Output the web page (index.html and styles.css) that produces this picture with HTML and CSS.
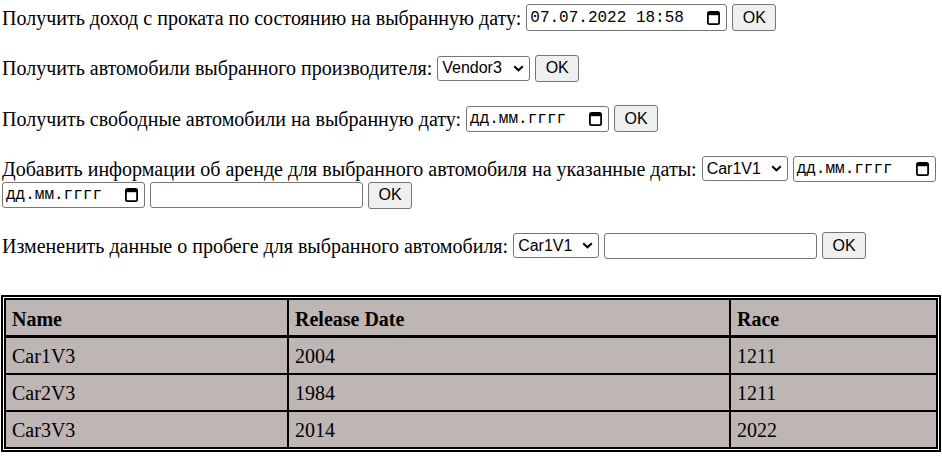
FILE: index.html
```html
<!DOCTYPE html>
<html lang="ru">
<head>
<meta charset="utf-8">
<title>Прокат автомобилей</title>
<link rel="stylesheet" href="styles.css">
</head>
<body>
<div class="forms">
  <div class="line">
    <span class="label">Получить доход с проката по состоянию на выбранную дату:</span>
    <span class="field date wide">07.07.2022 18:58<svg class="cal" width="13" height="14" viewBox="0 0 13 14"><rect x="0.9" y="0.9" width="11.2" height="12.2" rx="1.6" fill="none" stroke="#000" stroke-width="1.8"/><rect x="1" y="1" width="11" height="3.2" fill="#000"/></svg></span>
    <span class="btn">OK</span>
  </div>
  <div class="line">
    <span class="label">Получить автомобили выбранного производителя:</span>
    <span class="field select vendor">Vendor3<svg class="chev" width="11" height="7" viewBox="0 0 11 7"><path d="M1.2 1.2 L5.5 5.3 L9.8 1.2" fill="none" stroke="#000" stroke-width="2"/></svg></span>
    <span class="btn">OK</span>
  </div>
  <div class="line">
    <span class="label">Получить свободные автомобили на выбранную дату:</span>
    <span class="field date">дд.мм.гггг<svg class="cal" width="13" height="14" viewBox="0 0 13 14"><rect x="0.9" y="0.9" width="11.2" height="12.2" rx="1.6" fill="none" stroke="#000" stroke-width="1.8"/><rect x="1" y="1" width="11" height="3.2" fill="#000"/></svg></span>
    <span class="btn">OK</span>
  </div>
  <div class="line">
    <span class="label">Добавить информации об аренде для выбранного автомобиля на указанные даты:</span>
    <span class="field select car">Car1V1<svg class="chev" width="11" height="7" viewBox="0 0 11 7"><path d="M1.2 1.2 L5.5 5.3 L9.8 1.2" fill="none" stroke="#000" stroke-width="2"/></svg></span>
    <span class="field date">дд.мм.гггг<svg class="cal" width="13" height="14" viewBox="0 0 13 14"><rect x="0.9" y="0.9" width="11.2" height="12.2" rx="1.6" fill="none" stroke="#000" stroke-width="1.8"/><rect x="1" y="1" width="11" height="3.2" fill="#000"/></svg></span>
    <span class="break"></span>
    <span class="field date">дд.мм.гггг<svg class="cal" width="13" height="14" viewBox="0 0 13 14"><rect x="0.9" y="0.9" width="11.2" height="12.2" rx="1.6" fill="none" stroke="#000" stroke-width="1.8"/><rect x="1" y="1" width="11" height="3.2" fill="#000"/></svg></span>
    <span class="field text"></span>
    <span class="btn">OK</span>
  </div>
  <div class="line">
    <span class="label">Измененить данные о пробеге для выбранного автомобиля:</span>
    <span class="field select car">Car1V1<svg class="chev" width="11" height="7" viewBox="0 0 11 7"><path d="M1.2 1.2 L5.5 5.3 L9.8 1.2" fill="none" stroke="#000" stroke-width="2"/></svg></span>
    <span class="field text"></span>
    <span class="btn">OK</span>
  </div>
</div>
<div class="frame">
  <table class="cars">
    <thead>
      <tr><th class="c1">Name</th><th class="c2">Release Date</th><th class="c3">Race</th></tr>
    </thead>
    <tbody>
      <tr><td>Car1V3</td><td>2004</td><td>1211</td></tr>
      <tr><td>Car2V3</td><td>1984</td><td>1211</td></tr>
      <tr><td>Car3V3</td><td>2014</td><td>2022</td></tr>
    </tbody>
  </table>
</div>
</body>
</html>
```
FILE: styles.css
```css
html, body {
  margin: 0;
  padding: 0;
  background: #fff;
}
body {
  padding: 4px 1px 0 1px;
  font-family: "Liberation Serif", "Times New Roman", serif;
  font-size: 20px;
  color: #000;
}
.forms {
  display: flex;
  flex-direction: column;
  row-gap: 23.5px;
  padding-left: 1px;
}
.line {
  display: flex;
  flex-wrap: wrap;
  align-items: center;
  column-gap: 5px;
}
.label {
  line-height: 22px;
  white-space: nowrap;
}
.break {
  flex-basis: 100%;
  height: 0;
}
.field {
  box-sizing: border-box;
  display: inline-flex;
  align-items: center;
  justify-content: space-between;
  border: 1px solid #767676;
  border-radius: 3px;
  background: #fff;
  height: 26px;
}
.date {
  width: 143px;
  padding: 0 6px 0 3px;
  font-family: "Liberation Mono", "Courier New", monospace;
  font-size: 16px;
}
.date.wide {
  width: 201px;
  height: 27px;
}
.cal {
  display: block;
  flex: none;
}
.select {
  height: 25px;
  padding: 0 5px 0 4px;
  font-family: "Liberation Sans", Arial, sans-serif;
  font-size: 16px;
}
.vendor { width: 93px; }
.car { width: 86px; }
.chev { display: block; flex: none; }
.text {
  width: 213px;
}
.btn {
  box-sizing: border-box;
  display: inline-flex;
  align-items: center;
  justify-content: center;
  width: 44px;
  height: 27px;
  border: 1px solid #767676;
  border-radius: 3px;
  background: #efefef;
  font-family: "Liberation Sans", Arial, sans-serif;
  font-size: 16px;
}
.frame {
  margin-top: 36px;
  border: 2px solid #000;
  padding: 1px;
}
.cars {
  width: 100%;
  border: 1px solid #000;
  border-spacing: 0;
  background: #beb5b5;
}
.cars th, .cars td {
  box-sizing: border-box;
  border: 1px solid #000;
  text-align: left;
  line-height: 22px;
  padding: 7px 6px 6px;
  font-size: 20px;
}
.cars th {
  border-bottom-width: 2px;
  padding: 8px 6px 5px;
}
.c1 { width: 283px; }
.c2 { width: 442px; }
```
